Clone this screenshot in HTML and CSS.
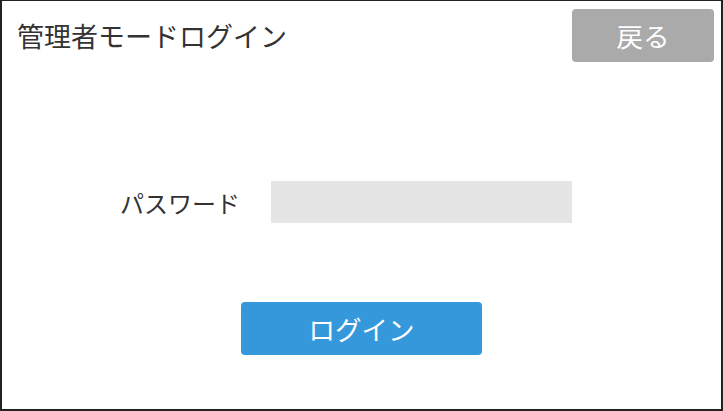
FILE: index.html
```html
<!DOCTYPE html>
<html lang="ja">
<head>
    <meta charset="UTF-8">
    <meta name="viewport" content="width=device-width, initial-scale=1.0">
    <title>管理者モードログイン</title>
    <link rel="stylesheet" href="styles.css">
</head>
<body>
    <div class="admin-login">
        <div class="header">
            <h2>管理者モードログイン</h2>
            <button class="back-btn" type="button">戻る</button>
        </div>
        <form id="adminForm">
            <div class="form-row">
                <label for="password">パスワード</label>
                <input type="password" id="password" name="password">
            </div>
            <div class="button-row">
                <button type="submit" class="login-btn">ログイン</button>
            </div>
        </form>
    </div>
</body>
</html>
```

FILE: styles.css
```css
body {
    font-family: "Noto Sans CJK JP", "Noto Sans", sans-serif;
    background-color: #fff;
    margin: 0;
    padding: 0;
}
.admin-login {
    width: 723px;
    height: 411px;
    box-sizing: border-box;
    border: 2px solid #222;
    border-top-width: 1px;
    background-color: #fff;
}
.header {
    display: flex;
    justify-content: space-between;
    align-items: center;
    padding: 8px 7px 0 15px;
}
.header h2 {
    margin: 0;
    font-size: 27px;
    font-weight: normal;
    color: #333;
}
.back-btn {
    width: 142px;
    height: 53px;
    background-color: #aaa;
    color: #fff;
    border: none;
    border-radius: 4px;
    font-family: inherit;
    font-size: 26.5px;
    cursor: pointer;
}
.form-row {
    display: flex;
    align-items: center;
    margin-top: 119px;
    padding-left: 118px;
}
.form-row label {
    width: 151px;
    font-size: 24px;
    color: #333;
}
.form-row input {
    width: 301px;
    height: 42px;
    box-sizing: border-box;
    border: none;
    background-color: #e5e5e5;
    font-size: 18px;
    padding: 0 10px;
}
.form-row input:focus {
    outline: none;
}
.button-row {
    display: flex;
    justify-content: center;
    margin-top: 79px;
}
.login-btn {
    width: 241px;
    height: 53px;
    background-color: #3598db;
    color: #fff;
    border: none;
    border-radius: 4px;
    font-family: inherit;
    font-size: 26.5px;
    cursor: pointer;
}
```
